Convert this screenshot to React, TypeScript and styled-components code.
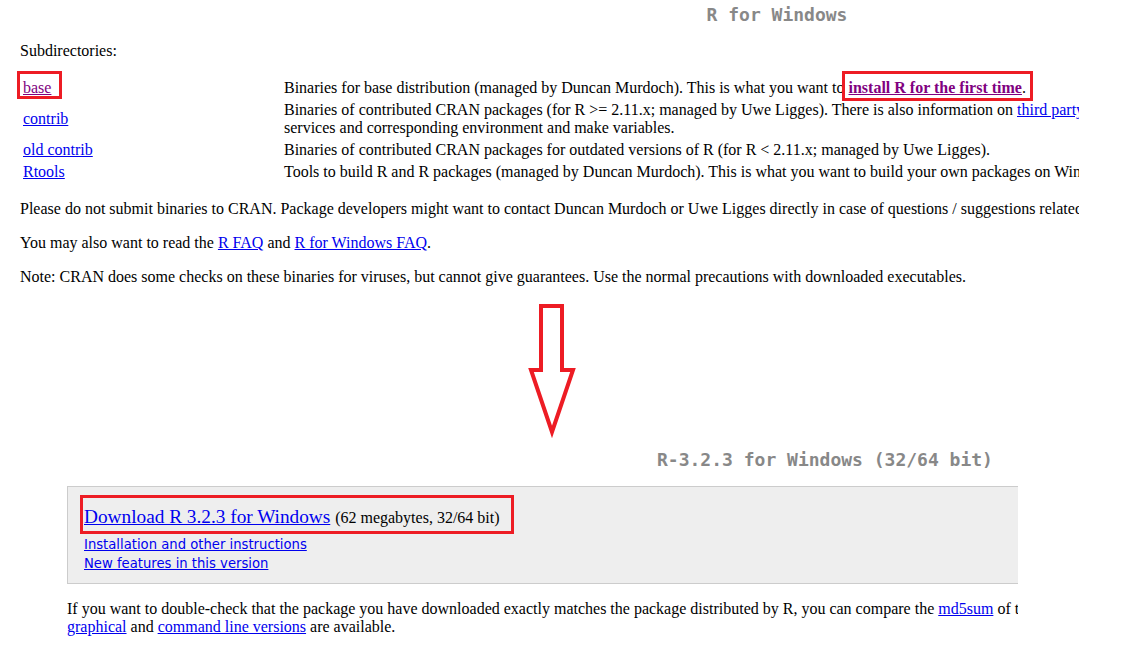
import React from "react";
import styled, { createGlobalStyle } from "styled-components";

const GlobalStyle = createGlobalStyle`
  html, body { margin: 0; padding: 0; background: #fff; }
  body {
    font-family: "Liberation Serif", "Times New Roman", serif;
    font-size: 16px;
    line-height: 18px;
    color: #000;
  }
`;

const Screen = styled.div`
  width: 1131px;
  height: 665px;
  overflow: hidden;
  background: #fff;
`;

const Clip = styled.div<{ $w: number; $h?: number; $pt?: number }>`
  width: ${(p) => p.$w}px;
  height: ${(p) => (p.$h ? `${p.$h}px` : "auto")};
  padding-top: ${(p) => p.$pt ?? 0}px;
  box-sizing: border-box;
  overflow: hidden;
`;

const Page = styled.div<{ $left: number; $w: number }>`
  width: ${(p) => p.$w}px;
  padding-left: ${(p) => p.$left}px;
  white-space: nowrap;
`;

const Heading = styled.h1`
  margin: 0;
  font-family: "DejaVu Sans Mono", "Liberation Mono", monospace;
  font-size: 18px;
  font-weight: bold;
  line-height: 28px;
  color: #888;
  text-align: center;
`;

const Para = styled.p<{ $top?: number }>`
  margin: ${(p) => p.$top ?? 16}px 0 16px;
`;

const DirTable = styled.table`
  border-collapse: separate;
  border-spacing: 2px;
  td {
    padding: 1px;
    vertical-align: middle;
  }
`;

const NameCell = styled.td`
  width: 257px;
`;

const Link = styled.a<{ $visited?: boolean; $bold?: boolean }>`
  color: ${(p) => (p.$visited ? "#800080" : "#0000ee")};
  font-weight: ${(p) => (p.$bold ? "bold" : "normal")};
  text-decoration: underline;
  cursor: pointer;
`;

const Marked = styled.span`
  position: relative;
  display: inline-block;
`;

const RedMark = styled.span<{ $t: number; $l: number; $r: number; $b: number }>`
  position: absolute;
  top: ${(p) => p.$t}px;
  left: ${(p) => p.$l}px;
  right: ${(p) => p.$r}px;
  bottom: ${(p) => p.$b}px;
  border: 3px solid #ed1c24;
  pointer-events: none;
`;

const ArrowWrap = styled.div`
  padding: 0 0 5px 527px;
  svg { display: block; }
`;

const DownloadBox = styled.div`
  margin-top: 12px;
  background: #eeeeee;
  border: 1px solid #cccccc;
  padding: 18px 16px 10px;
`;

const DownloadLine = styled.div`
  font-size: 19.3px;
  line-height: 24px;
`;

const Size = styled.span`
  font-size: 16px;
`;

const SubLinks = styled.div`
  margin-top: 5px;
  display: flex;
  flex-direction: column;
  align-items: flex-start;
  font-family: "DejaVu Sans", Verdana, sans-serif;
  font-size: 13.2px;
  line-height: 19px;
`;

const DownArrow = () => (
  <svg width="50" height="140" viewBox="0 0 50 140">
    <polygon
      points="14,5 35,5 35,69 46,69 25,131 4,69 14,69"
      fill="#fff"
      stroke="#ed1c24"
      strokeWidth="4"
      strokeLinejoin="miter"
    />
  </svg>
);

export default function App() {
  return (
    <Screen>
      <GlobalStyle />
      <Clip $w={1079} $h={301} $pt={1}>
        <Page $left={20} $w={1514}>
          <Heading>R for Windows</Heading>
          <Para $top={13}>Subdirectories:</Para>
          <DirTable>
            <tbody>
              <tr>
                <NameCell>
                  <Marked>
                    <Link $visited>base</Link>
                    <RedMark $t={-8} $l={-6} $r={-11} $b={-2} />
                  </Marked>
                </NameCell>
                <td>
                  Binaries for base distribution (managed by Duncan Murdoch). This is what you want to{" "}
                  <Marked>
                    <Link $visited $bold>install R for the first time</Link>.
                    <RedMark $t={-8} $l={-6} $r={-7} $b={-4} />
                  </Marked>
                </td>
              </tr>
              <tr>
                <NameCell>
                  <Link>contrib</Link>
                </NameCell>
                <td>
                  Binaries of contributed CRAN packages (for R &gt;= 2.11.x; managed by Uwe Ligges). There is also
                  information on <Link>third party software</Link> available for CRAN Windows
                  <br />
                  services and corresponding environment and make variables.
                </td>
              </tr>
              <tr>
                <NameCell>
                  <Link>old contrib</Link>
                </NameCell>
                <td>
                  Binaries of contributed CRAN packages for outdated versions of R (for R &lt; 2.11.x; managed by Uwe
                  Ligges).
                </td>
              </tr>
              <tr>
                <NameCell>
                  <Link>Rtools</Link>
                </NameCell>
                <td>
                  Tools to build R and R packages (managed by Duncan Murdoch). This is what you want to build your own
                  packages on Windows, or to build R itself.
                </td>
              </tr>
            </tbody>
          </DirTable>
          <Para>
            Please do not submit binaries to CRAN. Package developers might want to contact Duncan Murdoch or Uwe
            Ligges directly in case of questions / suggestions related to Windows binaries.
          </Para>
          <Para>
            You may also want to read the <Link>R FAQ</Link> and <Link>R for Windows FAQ</Link>.
          </Para>
          <Para>
            Note: CRAN does some checks on these binaries for viruses, but cannot give guarantees. Use the normal
            precautions with downloaded executables.
          </Para>
        </Page>
      </Clip>
      <ArrowWrap>
        <DownArrow />
      </ArrowWrap>
      <Clip $w={1018}>
        <Page $left={67} $w={1516}>
          <Heading>R-3.2.3 for Windows (32/64 bit)</Heading>
          <DownloadBox>
            <DownloadLine>
              <Marked>
                <Link>Download R 3.2.3 for Windows</Link> <Size>(62 megabytes, 32/64 bit)</Size>
                <RedMark $t={-10} $l={-4} $r={-14} $b={-4} />
              </Marked>
            </DownloadLine>
            <SubLinks>
              <Link>Installation and other instructions</Link>
              <Link>New features in this version</Link>
            </SubLinks>
          </DownloadBox>
          <Para>
            If you want to double-check that the package you have downloaded exactly matches the package distributed
            by R, you can compare the <Link>md5sum</Link> of the .exe to the true fingerprint. You will need a version
            of md5sum for windows: both
            <br />
            <Link>graphical</Link> and <Link>command line versions</Link> are available.
          </Para>
        </Page>
      </Clip>
    </Screen>
  );
}
